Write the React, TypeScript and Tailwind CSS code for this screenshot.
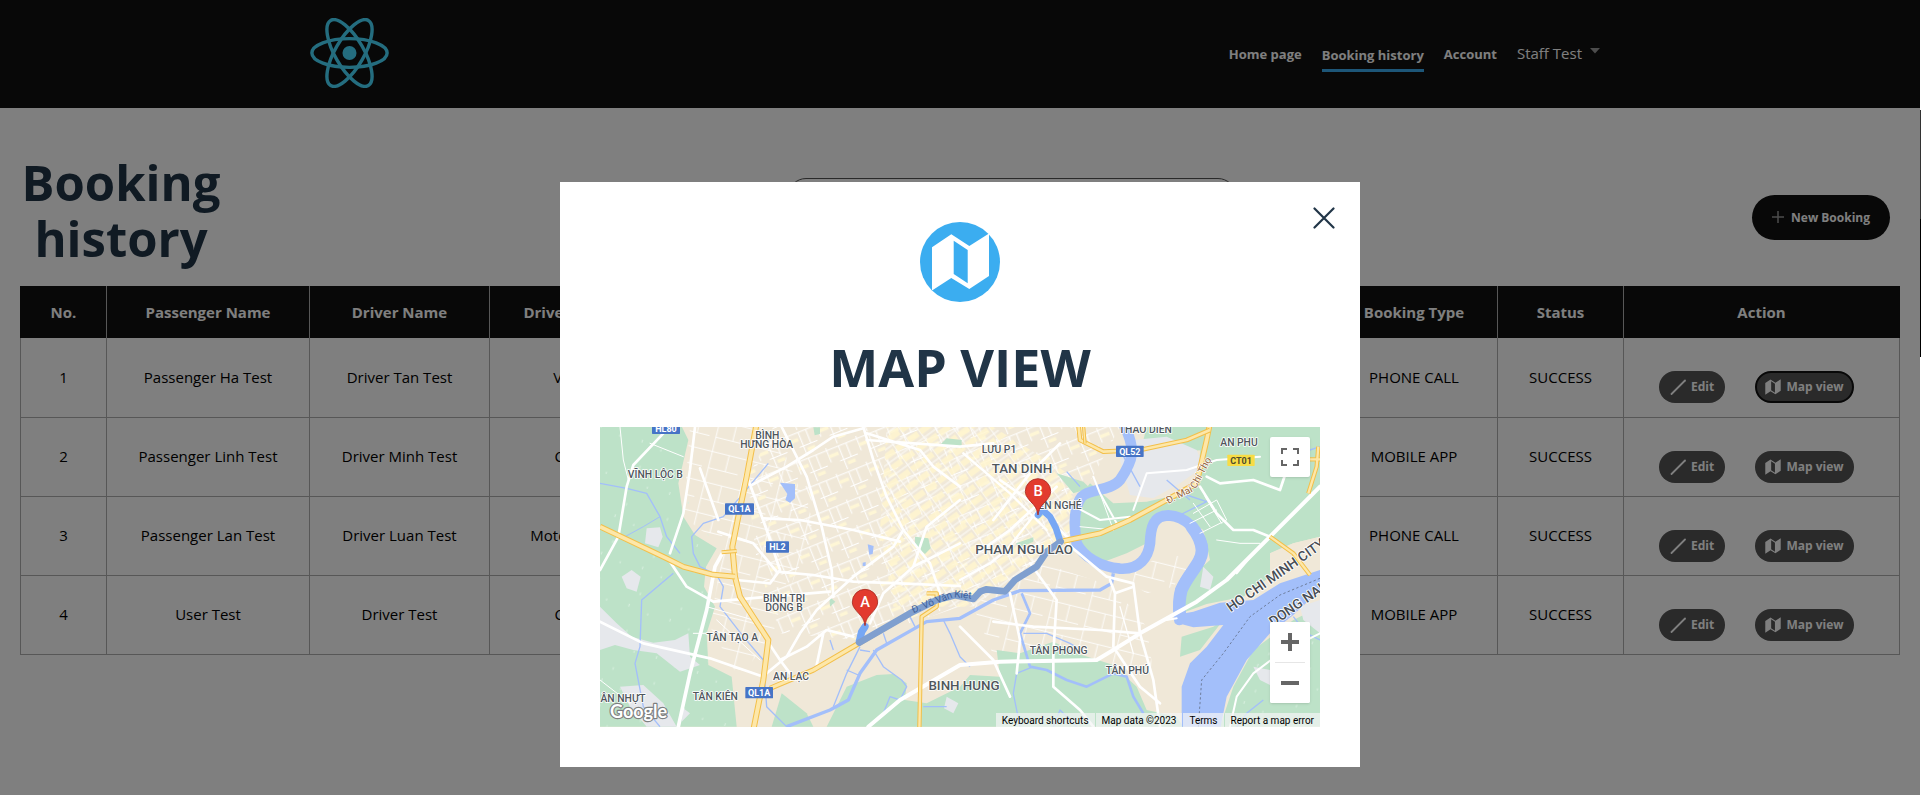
import React from "react";

type Booking = {
  no: number;
  passenger: string;
  driver: string;
  vehicle: string;
  bookingType: string;
  status: string;
};

const bookings: Booking[] = [
  { no: 1, passenger: "Passenger Ha Test", driver: "Driver Tan Test", vehicle: "Van", bookingType: "PHONE CALL", status: "SUCCESS" },
  { no: 2, passenger: "Passenger Linh Test", driver: "Driver Minh Test", vehicle: "Car", bookingType: "MOBILE APP", status: "SUCCESS" },
  { no: 3, passenger: "Passenger Lan Test", driver: "Driver Luan Test", vehicle: "Motorbike", bookingType: "PHONE CALL", status: "SUCCESS" },
  { no: 4, passenger: "User Test", driver: "Driver Test", vehicle: "Car", bookingType: "MOBILE APP", status: "SUCCESS" },
];

function ReactLogo() {
  return (
    <svg viewBox="-11.5 -10.23 23 20.46" className="-mt-[2px] h-[70px] w-[79px]" fill="none" stroke="#48daff" aria-label="React" role="img">
      <circle r="2.05" fill="#48daff" stroke="none" />
      <ellipse rx="11" ry="4.2" />
      <ellipse rx="11" ry="4.2" transform="rotate(60)" />
      <ellipse rx="11" ry="4.2" transform="rotate(120)" />
    </svg>
  );
}

const foldedMap =
  "M12 25.3 31.3 12.3 49.3 24 69 11.5V54L49.3 67 31.3 56 12 68.5ZM33.7 18.7V52L47.7 61.3V28Z";

function MapIcon() {
  return (
    <svg viewBox="11 11 59 58" className="size-4" aria-hidden="true">
      <path d={foldedMap} fill="currentColor" fillRule="evenodd" />
    </svg>
  );
}

function MapBadge() {
  return (
    <svg viewBox="0 0 80 80" className="size-20" aria-hidden="true">
      <circle cx="40" cy="40" r="40" fill="#3badf0" />
      <path d={foldedMap} fill="#fff" fillRule="evenodd" />
    </svg>
  );
}

function Header() {
  return (
    <header className="bg-[#101010]">
      <div className="mx-auto flex h-[108px] max-w-[1300px] items-center justify-between">
        <a href="#home">
          <ReactLogo />
        </a>
        <nav className="flex items-center gap-5 pt-[2px] pr-[10px] text-[13px] font-bold text-white">
          <a href="#home">Home page</a>
          <a href="#history" className="-mb-2 border-b-3 border-[#3badf0] pb-1">
            Booking history
          </a>
          <a href="#account">Account</a>
          <button type="button" className="-mt-1 flex items-center gap-2 text-[15px] font-normal">
            Staff Test
            <svg viewBox="0 0 10 6" className="-mt-1 h-[6px] w-[10px]" aria-hidden="true">
              <path d="M0 0h10L5 5.500Z" fill="#999" />
            </svg>
          </button>
        </nav>
      </div>
    </header>
  );
}

function Toolbar() {
  return (
    <div className="flex items-center justify-between">
      <h1 className="mr-[50px] w-[202px] pb-[14px] text-center text-[49px] leading-[56px] font-bold text-[#213547]">Booking history</h1>
      <input
        type="search"
        aria-label="Search bookings"
        className="h-[78px] w-[448px] rounded-[18px] border border-[#555] bg-transparent px-4"
      />
      <button
        type="button"
        className="mr-[10px] flex h-[45px] w-[138px] items-center justify-center gap-[7px] rounded-full bg-[#101010] pt-[2px] text-[12px] font-bold text-white"
      >
        <svg viewBox="0 0 12 12" className="-mt-[2px] size-3" stroke="#999" strokeWidth="1.500" aria-hidden="true">
          <path d="M6 0v12M0 6h12" />
        </svg>
        New Booking
      </button>
    </div>
  );
}

const actionButton =
  "flex h-8 items-center justify-center gap-[5px] rounded-full bg-[#545454] text-[12px] font-bold text-white";

function BookingTable() {
  return (
    <table className="mt-[6px] w-full table-fixed border-collapse text-center text-[15px]">
      <colgroup>
        <col className="w-[86px]" />
        <col className="w-[203px]" />
        <col className="w-[180px]" />
        <col className="w-[154px]" />
        <col />
        <col className="w-[167px]" />
        <col className="w-[126px]" />
        <col className="w-[276px]" />
      </colgroup>
      <thead className="bg-[#101010] text-white">
        <tr className="h-[52px] *:border-x *:border-[#aeaeae] *:first:border-l-[#101010] *:last:border-r-[#101010]">
          <th scope="col">No.</th>
          <th scope="col">Passenger Name</th>
          <th scope="col">Driver Name</th>
          <th scope="col">Driver Type</th>
          <td />
          <th scope="col">Booking Type</th>
          <th scope="col">Status</th>
          <th scope="col">Action</th>
        </tr>
      </thead>
      <tbody>
        {bookings.map((b) => (
          <tr key={b.no} className="h-[79px] *:border *:border-t-0 *:border-[#aeaeae]">
            <td>{b.no}</td>
            <td>{b.passenger}</td>
            <td>{b.driver}</td>
            <td>{b.vehicle}</td>
            <td />
            <td>{b.bookingType}</td>
            <td>{b.status}</td>
            <td>
              <div className="flex items-center justify-center gap-[30px] pt-5 pr-[10px]">
                <button type="button" className={`${actionButton} w-[66px]`}>
                  <svg viewBox="0 0 16 16" className="size-4" stroke="currentColor" strokeWidth="1.800" strokeLinecap="round" aria-hidden="true">
                    <path d="M1.500 15 15 1.500" />
                  </svg>
                  Edit
                </button>
                <button
                  type="button"
                  className={`${actionButton} w-[99px] ${b.no === 1 ? "border-2 border-[#101010]" : ""}`}
                >
                  <MapIcon />
                  Map view
                </button>
              </div>
            </td>
          </tr>
        ))}
      </tbody>
    </table>
  );
}

/* ---------- Map drawing ---------- */

function Highway({ d, w = 15 }: { d: string; w?: number }) {
  return (
    <g fill="none" strokeLinejoin="round">
      <path d={d} stroke="#f3bf49" strokeWidth={w} />
      <path d={d} stroke="#fde7a9" strokeWidth={w - 6} />
    </g>
  );
}

function Place({ x, y, size = 31, children }: { x: number; y: number; size?: number; children: React.ReactNode }) {
  return (
    <text
      x={x}
      y={y}
      fontSize={size}
      fontWeight="500"
      textAnchor="middle"
      fill="#4f565c"
      stroke="#fff"
      strokeWidth="5"
      strokeLinejoin="round"
      paintOrder="stroke"
    >
      {children}
    </text>
  );
}

function Shield({ x, y, w, fill = "#4674c6", color = "#fff", children }: { x: number; y: number; w: number; fill?: string; color?: string; children: React.ReactNode }) {
  return (
    <g>
      <rect x={x} y={y} width={w} height="34" rx="2" fill={fill} />
      <text x={x + w / 2} y={y + 27} fontSize="27" fontWeight="700" textAnchor="middle" fill={color}>
        {children}
      </text>
    </g>
  );
}

function Pin({ x, y, label }: { x: number; y: number; label: string }) {
  return (
    <g transform={`translate(${x} ${y})`}>
      <path
        d="M0 70C-4 44-14 40-27 24-34 15-38 9-38-1A38 38 0 0 1 38-1C38 9 34 15 27 24 14 40 4 44 0 70Z"
        fill="#e23b2e"
        stroke="#a82a20"
        strokeWidth="2.500"
      />
      <text y="14" fontSize="44" fontWeight="500" textAnchor="middle" fill="#fff" fontFamily="Roboto, sans-serif">
        {label}
      </text>
    </g>
  );
}

function MapDrawing() {
  return (
    <svg viewBox="0 21 2160 900" preserveAspectRatio="xMidYMid slice" className="size-full font-[Roboto,sans-serif]" role="img" aria-label="Route from A to B">
      <defs>
        <pattern id="grid-a" width="97" height="83" patternUnits="userSpaceOnUse" patternTransform="rotate(-22)">
          <path d="M0 8H97M14 0V46M52 8V83M40 52H97M76 8V52" stroke="#fff" strokeWidth="3" fill="none" />
          <path d="M14 28H44M60 66H84" stroke="#fef6d6" strokeWidth="10" fill="none" />
        </pattern>
        <pattern id="grid-b" width="44" height="38" patternUnits="userSpaceOnUse" patternTransform="rotate(-36)">
          <path d="M0 6H44M8 0V38" stroke="#fff" strokeWidth="3" fill="none" />
          <path d="M8 24H44" stroke="#fff5cf" strokeWidth="18" fill="none" />
        </pattern>
        <pattern id="grid-c" width="110" height="94" patternUnits="userSpaceOnUse" patternTransform="rotate(14)">
          <path d="M0 10H110M20 0V94M72 10V60M20 60H110" stroke="#fff" strokeWidth="2.500" fill="none" />
        </pattern>
        <pattern id="specks" width="131" height="119" patternUnits="userSpaceOnUse" patternTransform="rotate(20)">
          <path d="M10 12v9M72 20v7M30 88v8" stroke="#d8efdf" strokeWidth="3" fill="none" />
        </pattern>
      </defs>

      <rect y="21" width="2160" height="900" fill="#f0e8d8" />

      {/* street texture */}
      <path d="M270 21H520L640 300 540 600 420 780 330 620 370 380 250 290Z" fill="url(#grid-c)" />
      <path d="M520 21H1560L1440 240 1400 360 1240 470 1080 560 780 660 540 640 470 420 440 180Z" fill="url(#grid-a)" />
      <path d="M860 21H1180L1420 170 1420 340 1300 430 1120 560 880 560 840 330Z" fill="url(#grid-b)" opacity=".85" />
      <path d="M1120 560 1300 420 1540 500 1640 620 1660 760 1500 740 1190 730Z" fill="url(#grid-c)" />
      <path d="M1560 470 1700 400 1780 420 1720 500 1640 520Z" fill="url(#grid-c)" />

      {/* vegetation */}
      <g fill="#bde2c8">
        <path d="M0 21H246L265 60 235 190 250 290 285 345 350 385 318 440 312 500 345 560 320 640 325 735 395 770 410 920H0Z" />
        <path d="M515 920 545 820 620 880 640 920Z" />
        <path d="M680 920 740 800 830 765 880 762 920 790 915 840 980 850 1080 800 1110 765 1200 770 1190 690 1260 700 1360 665 1430 700 1540 735 1610 800 1640 870 1730 890 1750 920Z" />
        <path d="M1415 360 1425 250 1470 190 1540 250 1640 245 1730 225 1790 200 1800 100 1810 21H2160V350L2080 370 2010 400 2010 470 1930 530 1820 552 1730 585 1740 500 1830 420 1810 330 1720 275 1660 300 1640 370 1580 400 1500 430 1440 410Z" />
        <path d="M1620 100 1640 21H1820V90Z" />
        <path d="M1745 650 1840 620 1870 600 1800 690 1740 710Z" />
        <path d="M1860 920 1900 800 1960 690 2080 600 2160 560V920Z" />
        <path d="M1370 160 1450 185 1470 205 1420 220Z" />
        <path d="M945 350 985 355 992 385 975 402 945 378Z" />
        <path d="M640 22H660V42L644 46Z M1020 75 1040 55 1085 60V85L1050 78Z" />
        <path d="M688 530 706 545 690 560Z M1248 370 1300 352 1300 365 1256 385Z M1312 270 1330 285 1312 300Z" />
      </g>
      <path d="M0 21H240L235 190 350 385 318 440 325 735 400 780 400 920H0Z" fill="url(#specks)" />
      <path d="M1860 920 1960 690 2160 600V920Z" fill="url(#specks)" />

      {/* grey ground */}
      <g fill="#e6e8ec">
        <path d="M0 560 50 610 95 650 160 668 225 660 265 640 270 710 300 735 240 755 170 700 100 690 45 675 0 690Z" />
        <path d="M140 325 180 322 188 350 175 382 135 370Z M65 470 95 450 122 470 110 515 80 505Z" />
        <path d="M60 800 130 795 190 850 230 920H140L90 860Z M250 865 270 880 245 905Z" />
        <path d="M1600 60 1700 50 1790 90 1810 140 1740 190 1660 235 1590 225 1560 120Z" />
        <path d="M1040 830 1075 850 1060 880 1032 865Z" />
        <path d="M1810 440 1840 470 1830 510 1800 500Z M1960 740 2010 750 2020 800 1980 780Z M2100 560 2160 540V640L2110 600Z" />
      </g>
      <path d="M2010 400 2080 370 2160 350V450L2040 485 2020 470Z" fill="#f0e8d8" />

      {/* streams and canals */}
      <g fill="none" stroke="#a3bffa" strokeWidth="4" strokeLinejoin="round">
        <path d="M505 130 430 220 370 290 310 310 275 350 280 400 300 440 350 465 370 500 360 560 430 650 490 720 500 860 560 920" />
        <path d="M0 190 80 205 140 220 180 290 200 350 240 400M220 460 125 540 120 680 105 730 130 860 180 920" />
        <path d="M75 350 130 320 180 290" strokeWidth="3" />
        <path d="M690 660 700 690M780 680 740 760 700 860M780 690 810 695M740 750 775 765M850 640 860 670" />
        <path d="M820 690 850 740 905 780 920 800 900 840 870 830 850 880" />
        <path d="M930 590 945 620M1030 600 1050 640 1080 710 1110 740M970 860 1040 860" />
        <path d="M1265 520 1290 580 1260 640 1290 740 1340 750 1400 780 1460 800 1540 760 1580 770 1600 830 1630 880" strokeWidth="8" />
        <path d="M1270 640 1340 640 1410 670 1460 700M1300 740 1250 760 1240 820 1260 920M1360 920 1380 870 1430 920" />
        <path d="M1400 155 1440 200M1560 90 1620 200M1760 225 1820 245 1730 290M1770 240 1700 180" />
        <path d="M2130 90 2160 80M1920 600 1960 620M1990 840 1940 880 1910 920M2080 590 2120 640 2160 660" />
      </g>
      <path d="M540 188 585 192V235L570 248 556 240 562 222Z M803 373 821 378 818 402 808 404Z M788 428l9 -2v12h-9Z" fill="#a3bffa" />
      <path d="M560 920 690 870 745 840 780 760 830 690 980 605 1080 595 1180 540 1260 512 1500 510 1535 490 1540 460" fill="none" stroke="#a3bffa" strokeWidth="10" strokeLinejoin="round" />

      {/* river */}
      <g fill="none" stroke="#a3bffa" strokeLinejoin="round" strokeLinecap="round">
        <path d="M1570 10C1610 90 1600 120 1560 180C1530 215 1470 205 1445 230C1415 270 1425 340 1430 370C1450 410 1500 440 1560 446C1620 450 1645 410 1650 370C1652 320 1660 287 1705 286C1760 287 1800 340 1808 380C1812 430 1768 450 1742 510C1735 540 1735 560 1738 600" strokeWidth="32" />
        <path d="M1775 320C1795 345 1804 365 1806 390C1806 430 1768 455 1744 510C1736 540 1736 560 1740 590" strokeWidth="38" />
      </g>
      <path d="M2160 450 2040 490 1960 540 1860 548 1780 575 1725 585 1735 610 1780 622 1870 615 1820 680 1770 730 1745 800 1745 920H1862L1880 830 1940 720 2010 640 2080 585 2160 510Z" fill="#a3bffa" />
      <path d="M2160 475 2040 525 1950 590 1870 700 1805 780 1795 920" fill="none" stroke="#6d7d9c" strokeWidth="3" strokeDasharray="7 7" />

      {/* main white roads */}
      <g fill="none" stroke="#fff" strokeWidth="8" strokeLinejoin="round" strokeLinecap="round">
        <path d="M285 21 270 150 250 280 210 400M190 40 100 135 80 200 55 350 0 450" />
        <path d="M210 425 260 500 340 545 450 535 690 515" />
        <path d="M370 395 345 440 320 570 270 760 235 920" strokeWidth="11" />
        <path d="M0 605 130 670 330 715 490 770" />
        <path d="M355 335 460 370 530 455 640 465 760 485 900 490 1080 498" />
        <path d="M300 145 355 300M545 21 620 170 665 320 695 450 700 530" />
        <path d="M445 180 500 330 540 450 510 490 410 480" />
        <path d="M455 195 560 140 640 90 700 50 790 25" />
        <path d="M790 21 820 120 860 230 910 330 990 430 1020 520" />
        <path d="M800 60 1080 80 1180 70M1080 200 1000 140 960 90 800 40" />
        <path d="M490 295 600 300 760 330 900 365M910 330 880 380 760 470 650 570 600 640 560 710 500 760" />
        <path d="M1080 370 940 440 850 520 810 610M1080 240 980 320 940 440" />
        <path d="M540 720 500 660M570 760 540 720 620 680 680 630 760 650M650 735 670 640" />
        <path d="M805 920 900 840 1080 735 1200 725 1490 720 1540 690 1620 640 1790 545 1880 480 2010 350 2160 200" strokeWidth="12" />
        <path d="M1080 620 1180 720 1230 830M1230 520 1260 660 1250 760" />
        <path d="M1290 430 1370 540 1360 700 1360 800 1440 870 1480 920" />
        <path d="M1180 605 1300 620 1500 630 1620 640" />
        <path d="M1395 365 1520 470 1600 490 1620 640 1660 780 1680 920" />
        <path d="M1530 480 1545 520 1540 680M1540 680 1620 800 1680 850M1545 520 1600 500" />
        <path d="M1200 180 1300 250 1400 350M1180 300 1290 160 1380 70M1130 400 1230 330 1370 200" />
        <path d="M1090 100 1230 220 1340 330M1080 480 1170 430 1220 390 1330 250" strokeWidth="7" />
        <path d="M1480 170 1500 220 1550 310M1425 260 1500 300 1590 290M1600 270 1640 160 1760 150 1850 120 1980 110" strokeWidth="6" />
        <path d="M1800 200 1850 280 1900 330 1960 330 2010 350M1820 170 1860 190 1960 180 2040 210 2060 150" />
        <path d="M2010 350 1960 400 1910 460M1700 600 1730 595" strokeWidth="6" />
        <path d="M2160 640 2040 700 1960 760 1910 830 1890 920" strokeWidth="6" />
        <path d="M1780 280 1850 240 1880 300 1800 340M1850 360 1920 370 1980 370" strokeWidth="3" />
        <path d="M1780 250 1830 320M1815 230 1865 310M1770 310 1850 270M1500 220 1540 330M1440 320 1540 330" strokeWidth="3" />
        <path d="M60 21 70 120 85 180M150 70 250 110M0 780 90 850M280 640 330 640M350 600 480 720M320 560 460 600" strokeWidth="3" />
        <path d="M1560 560 1600 700" strokeWidth="4" />
      </g>

      {/* highways */}
      <Highway d="M470 10 440 170 415 290 397 380 405 470 420 530 505 660 490 780 460 930" w={18} />
      <Highway d="M0 320 200 415 250 440 340 464 405 470" w={17} />
      <Highway d="M365 397 410 393" w={12} />
      <Highway d="M510 805 640 750 780 668 930 580" w={16} />
      <Highway d="M958 930 965 590 1010 560 1010 520 980 520" w={13} />
      <Highway d="M1390 363 1500 340 1590 300 1700 240 1790 190 1820 60 1830 10" w={17} />
      <Highway d="M1435 10 1440 60 1510 95 1620 90 1760 60 1830 30" w={14} />
      <Highway d="M1450 10 1455 70" w={10} />
      <Highway d="M2010 350 2080 400 2130 465" w={13} />
      <Highway d="M2125 220 2150 140 2155 80M2130 118 2165 118" w={13} />

      {/* planned route */}
      <g fill="none" strokeLinejoin="round" strokeLinecap="round">
        <path d="M795 620 785 635 778 665" stroke="#76a7f4" strokeWidth="22" />
        <path d="M1314 285 1325 268 1350 290 1368 325 1380 362" stroke="#76a7f4" strokeWidth="20" />
        <path d="M778 668 930 580 1010 540 1065 526 1120 537 1140 515 1158 508 1215 514 1245 480 1310 440 1340 395 1382 365" stroke="#7f9fcf" strokeWidth="20" />
      </g>

      {/* labels */}
      <Shield x={156} y={8} w={84}>HL80</Shield>
      <Shield x={375} y={250} w={87}>QL1A</Shield>
      <Shield x={498} y={364} w={69}>HL2</Shield>
      <Shield x={436} y={801} w={83}>QL1A</Shield>
      <Shield x={1548} y={77} w={83}>QL52</Shield>
      <Shield x={1882} y={104} w={82} fill="#f7dc45" color="#4f4b2c">CT01</Shield>
      <Place x={166} y={173}>VĨNH LỘC B</Place>
      <Place x={502} y={56}>BÌNH</Place>
      <Place x={500} y={84}>HƯNG HÒA</Place>
      <Place x={552} y={546}>BINH TRI</Place>
      <Place x={552} y={574}>DONG B</Place>
      <Place x={397} y={663}>TÂN TẠO A</Place>
      <Place x={573} y={780}>AN LẠC</Place>
      <Place x={346} y={839}>TÂN KIÊN</Place>
      <Place x={69} y={846}>ÂN NHỰT</Place>
      <Place x={1197} y={99}>LƯU P1</Place>
      <Place x={1266} y={158} size={40}>TAN DINH</Place>
      <Place x={1380} y={267}>ẾN NGHÉ</Place>
      <Place x={1272} y={401} size={40}>PHAM NGU LAO</Place>
      <Place x={1636} y={39}>THAO DIEN</Place>
      <Place x={1917} y={78}>AN PHU</Place>
      <Place x={1376} y={702}>TÂN PHONG</Place>
      <Place x={1582} y={762}>TÂN PHÚ</Place>
      <Place x={1092} y={810} size={40}>BINH HUNG</Place>
      <g fontSize="41" fontWeight="500" fill="#474d55" stroke="#fff" strokeWidth="5" strokeLinejoin="round" paintOrder="stroke">
        <text x="1892" y="577" transform="rotate(-35 1892 577)">HO CHI MINH CITY</text>
        <text x="2020" y="620" transform="rotate(-35 2020 620)">DONG NAI</text>
      </g>
      <g fontSize="30">
        <text x="940" y="580" fill="#40629c" transform="rotate(-22 940 580)">Đ. Võ Văn</text>
        <text x="1062" y="532" fill="#40629c" transform="rotate(5 1062 532)">Kiệt</text>
        <text x="1705" y="252" fill="#96653b" stroke="#fff" strokeWidth="4" paintOrder="stroke" transform="rotate(-27 1705 252)">Đ. Mai</text>
        <text x="1787" y="208" fill="#96653b" stroke="#fff" strokeWidth="4" paintOrder="stroke" transform="rotate(-62 1787 208)">Chí Thọ</text>
      </g>

      <Pin x={795} y={547} label="A" />
      <Pin x={1314} y={215} label="B" />

      <text x="30" y="895" fontSize="54" fontWeight="700" fill="#fff" stroke="#7d7f80" strokeWidth="7" strokeLinejoin="round" paintOrder="stroke" fontFamily="Lato, sans-serif">
        Google
      </text>
    </svg>
  );
}

const mapControl = "flex w-10 items-center justify-center bg-white text-[#666]";

function MapPanel() {
  return (
    <div className="relative h-[300px] overflow-hidden">
      <MapDrawing />
      <button
        type="button"
        aria-label="Toggle fullscreen view"
        className={`${mapControl} absolute top-[10px] right-[10px] h-10 rounded-xs shadow`}
      >
        <svg viewBox="0 0 18 18" className="size-[18px]" fill="currentColor" aria-hidden="true">
          <path d="M0 0v6h2V2h4V0ZM16 0h-4v2h4v4h2V0ZM16 16h-4v2h6v-6h-2ZM2 12H0v6h6v-2H2Z" />
        </svg>
      </button>
      <div className="absolute right-[10px] bottom-6 flex flex-col items-center overflow-hidden rounded-xs bg-white shadow">
        <button type="button" aria-label="Zoom in" className={`${mapControl} h-10`}>
          <svg viewBox="0 0 18 18" className="size-[18px]" fill="currentColor" aria-hidden="true">
            <path d="M18 7h-7V0H7v7H0v4h7v7h4v-7h7Z" />
          </svg>
        </button>
        <div className="h-px w-[30px] bg-[#e6e6e6]" />
        <button type="button" aria-label="Zoom out" className={`${mapControl} h-10`}>
          <svg viewBox="0 0 18 18" className="size-[18px]" fill="currentColor" aria-hidden="true">
            <path d="M0 7h18v4H0Z" />
          </svg>
        </button>
      </div>
      <div className="absolute right-0 bottom-0 flex h-[14px] gap-px font-[Roboto,sans-serif] text-[10px] leading-[15px] whitespace-nowrap text-black *:bg-[#f5f5f5]/70 *:px-[6px]">
        <button type="button">Keyboard shortcuts</button>
        <span>Map data ©2023</span>
        <a href="#terms">Terms</a>
        <a href="#report">Report a map error</a>
      </div>
    </div>
  );
}

function MapModal() {
  return (
    <div className="fixed inset-0 right-px flex items-start justify-center bg-black/50 pt-[182px]">
      <div role="dialog" aria-modal="true" aria-labelledby="map-title" className="relative w-[800px] max-w-full bg-white p-10">
        <button type="button" aria-label="Close" className="absolute top-[25px] right-[25px] text-[#213547]">
          <svg viewBox="0 0 22 22" className="size-[22px]" stroke="currentColor" strokeWidth="2.200" strokeLinecap="round" aria-hidden="true">
            <path d="M1.500 1.500 20.500 20.500M20.500 1.500 1.500 20.500" />
          </svg>
        </button>
        <div className="flex justify-center">
          <MapBadge />
        </div>
        <h2 id="map-title" className="mt-9 mb-8 text-center text-[52px] leading-[57px] font-bold text-[#213547]">
          MAP VIEW
        </h2>
        <MapPanel />
      </div>
    </div>
  );
}

export default function App() {
  return (
    <div className="min-h-screen bg-white pr-px font-['Open_Sans','Noto_Sans',sans-serif] text-black">
      <Header />
      <main className="px-5 pt-[46px]">
        <Toolbar />
        <BookingTable />
      </main>
      <MapModal />
      <div className="fixed top-[110px] right-0 flex h-[247px] w-px flex-col bg-black">
        <div className="h-[109px] bg-[#333]" />
      </div>
    </div>
  );
}
